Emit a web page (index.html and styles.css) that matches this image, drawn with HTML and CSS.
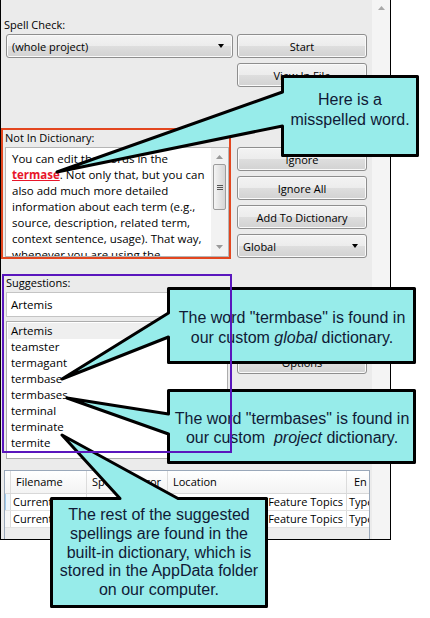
FILE: index.html
```html
<!DOCTYPE html>
<html>
<head>
<meta charset="utf-8">
<link rel="stylesheet" href="styles.css">
</head>
<body>
<div class="page">
  <div class="window">
    <div class="main">
      <section class="sec sec-top">
        <div class="col-left">
          <div class="label lbl-spell">Spell Check:</div>
          <div class="combo combo-wide"><span>(whole project)</span><i class="arrow"></i></div>
        </div>
        <div class="col-right pad-top">
          <div class="btn">Start</div>
          <div class="btn">View In File</div>
        </div>
      </section>

      <section class="sec sec-nid">
        <div class="col-left">
          <div class="frame frame-red">
            <div class="label">Not In Dictionary:</div>
            <div class="textbox">
              <div class="tb-text">You can edit the words in the<br><span class="miss">termase</span>. Not only that, but you can<br>also add much more detailed<br>information about each term (e.g.,<br>source, description, related term,<br>context sentence, usage). That way,<br>whenever you are using the</div>
              <div class="vscroll">
                <svg class="sarrow" width="7" height="4" viewBox="0 0 7 4"><path d="M0 4 L3.5 0 L7 4 Z" fill="#9a9a9a"/></svg>
                <div class="thumb"><i></i><i></i><i></i></div>
                <svg class="sarrow down" width="7" height="4" viewBox="0 0 7 4"><path d="M0 0 L3.5 4 L7 0 Z" fill="#9a9a9a"/></svg>
              </div>
            </div>
          </div>
        </div>
        <div class="col-right pad-nid">
          <div class="btn">Ignore</div>
          <div class="btn">Ignore All</div>
          <div class="btn">Add To Dictionary</div>
          <div class="combo"><span>Global</span><i class="arrow"></i></div>
        </div>
      </section>

      <section class="sec sec-sugg">
        <div class="col-left">
          <div class="frame frame-purple">
            <div class="label">Suggestions:</div>
            <div class="input">Artemis</div>
            <div class="list">
              <div class="item sel">Artemis</div>
              <div class="item">teamster</div>
              <div class="item">termagant</div>
              <div class="item">termbase</div>
              <div class="item">termbases</div>
              <div class="item">terminal</div>
              <div class="item">terminate</div>
              <div class="item">termite</div>
            </div>
          </div>
        </div>
        <div class="col-right pad-sugg">
          <div class="btn">Options</div>
        </div>
      </section>

      <div class="grid">
        <div class="trow thead">
          <div class="cell rh"></div>
          <div class="cell">Filename</div>
          <div class="cell">Spelling Error</div>
          <div class="cell">Location</div>
          <div class="cell last">En</div>
        </div>
        <div class="trow">
          <div class="cell rh cur"></div>
          <div class="cell">Current Project</div>
          <div class="cell">termase</div>
          <div class="cell right">Content/Feature Topics</div>
          <div class="cell last">Type</div>
        </div>
        <div class="trow">
          <div class="cell rh"></div>
          <div class="cell">Current Project</div>
          <div class="cell">termase</div>
          <div class="cell right">Content/Feature Topics</div>
          <div class="cell last">Type</div>
        </div>
      </div>
    </div>
    <div class="wscroll">
      <svg width="7" height="4" viewBox="0 0 7 4"><path d="M0 4 L3.5 0 L7 4 Z" fill="#a8a8a8"/></svg>
    </div>
  </div>

  <svg class="callouts" width="430" height="618" viewBox="0 0 430 618">
    <g fill="#97ecea" stroke="#000" stroke-width="3" stroke-linejoin="round">
      <path d="M282.5,76.5 H417.5 V155.5 H282.5 V126 L57,172 L282.5,92 Z"/>
      <path d="M168.5,288.5 H414.5 V362.5 H168.5 V337 L62,379 L168.5,313 Z"/>
      <path d="M168.5,390.5 H414.5 V462.5 H168.5 V434 L67,398 L168.5,414 Z"/>
      <path d="M51.5,498.5 H120 L62,435 L178,498.5 H266.5 V606.5 H51.5 Z"/>
    </g>
  </svg>
  <div class="ctext c1">Here is a<br>misspelled word.</div>
  <div class="ctext c2">The word "termbase" is found in<br>our custom <em>global</em> dictionary.</div>
  <div class="ctext c3">The word "termbases" is found in<br>our custom &nbsp;<em>project</em> dictionary.</div>
  <div class="ctext c4">The rest of the suggested<br>spellings are found in the<br>built-in dictionary, which is<br>stored in the AppData folder<br>on our computer.</div>
</div>
</body>
</html>
```

FILE: styles.css
```css
* { box-sizing: border-box; }
body {
  margin: 0;
  background: #fff;
  font-family: "Open Sans", "Noto Sans", sans-serif;
  font-size: 11px;
  color: #000;
}
.page {
  position: relative;
  width: 430px;
  height: 618px;
  overflow: hidden;
}
.window {
  width: 391px;
  height: 540px;
  border: 1px solid #000;
  border-top: 0;
  background: #ebebeb;
  display: flex;
}
.main {
  width: 371px;
  display: flex;
  flex-direction: column;
}
.wscroll {
  width: 18px;
  background: #f4f4f4;
  display: flex;
  justify-content: center;
  padding-top: 6px;
}
.wscroll svg { display: block; }

.sec { display: flex; gap: 4px; }
.col-left { width: 232px; }
.col-right {
  width: 130px;
  display: flex;
  flex-direction: column;
  gap: 5px;
}
.pad-top { padding-top: 34px; }
.pad-nid { padding-top: 19px; }
.pad-sugg { padding-top: 76px; }

.label {
  height: 16px;
  line-height: 16px;
  white-space: nowrap;
}
.lbl-spell { margin-top: 17px; padding-left: 3px; }

.btn, .combo {
  height: 24px;
  border: 1px solid #8e8e8e;
  border-radius: 3px;
  background: linear-gradient(#f3f3f3 0%, #ececec 50%, #dedede 50%, #d2d2d2 100%);
  box-shadow: inset 0 0 0 1px #fafafa;
  display: flex;
  align-items: center;
  white-space: nowrap;
}
.btn { justify-content: center; }
.combo {
  justify-content: space-between;
  padding: 0 8px 0 5px;
}
.combo-wide { margin: 1px 0 0 5px; width: 227px; }
.arrow {
  width: 0;
  height: 0;
  border-left: 3.5px solid transparent;
  border-right: 3.5px solid transparent;
  border-top: 4px solid #000;
}

.sec-nid { margin-top: 41px; }
.frame { position: relative; }
.frame::after {
  content: "";
  position: absolute;
  inset: 0;
  border: 2px solid;
  pointer-events: none;
}
.frame-red {
  width: 230px;
  height: 131px;
  padding: 2px 2px 2px 4px;
}
.frame-red::after { border-color: #e3461f; }

.textbox {
  margin-top: 1px;
  height: 110px;
  background: #fff;
  border: 1px solid #b5b5b5;
  display: flex;
  overflow: hidden;
}
.tb-text {
  flex: 1;
  padding: 3px 0 0 6px;
  line-height: 16px;
  font-size: 11.5px;
  white-space: nowrap;
  overflow: hidden;
}
.miss {
  color: #e8162a;
  font-weight: bold;
  text-decoration: underline;
}
.vscroll {
  width: 17px;
  background: #f2f2f2;
  display: flex;
  flex-direction: column;
  align-items: center;
  padding-top: 7px;
}
.sarrow { display: block; }
.sarrow.down { margin-top: auto; margin-bottom: 7px; }
.thumb {
  margin-top: 5px;
  width: 13px;
  height: 46px;
  border: 1px solid #9c9c9c;
  border-radius: 2px;
  background: linear-gradient(90deg, #f4f4f4, #e4e4e4 50%, #d6d6d6);
  display: flex;
  flex-direction: column;
  align-items: center;
  justify-content: center;
  gap: 1px;
}
.thumb i {
  display: block;
  width: 6px;
  height: 1px;
  background: #555;
}

.sec-sugg { margin-top: 15px; }
.sec-sugg .col-left { padding-left: 1px; }
.frame-purple {
  width: 230px;
  height: 179px;
  padding: 1px 2px 0 4px;
}
.frame-purple::after { border-color: #5a16bd; z-index: 2; }
.input {
  margin-top: 1px;
  height: 25px;
  width: 222px;
  background: #fff;
  border: 1px solid #c4c4c4;
  padding-left: 4px;
  line-height: 23px;
  font-size: 11.5px;
}
.list {
  margin-top: 4px;
  width: 222px;
  height: 138px;
  background: #fff;
  border: 1px solid #acacac;
  padding: 1px 1px 0 1px;
  font-size: 11.5px;
}
.item {
  height: 16px;
  line-height: 16px;
  padding-left: 3px;
}
.item.sel { background: #efefef; }

.grid {
  margin: 17px 0 0 3px;
  width: 366px;
  height: 69px;
  border: 1px solid #9aa8ba;
  border-bottom: 0;
  background: #ededed;
}
.trow {
  display: grid;
  grid-template-columns: 6px 76px 81px 179px 22px;
  height: 17px;
  background: #fff;
  border-bottom: 1px solid #e2e2e2;
}
.thead {
  height: 23px;
  background: linear-gradient(#fff, #f3f3f3);
  border-bottom: 1px solid #d8d8d8;
}
.cell {
  border-right: 1px solid #dcdcdc;
  white-space: nowrap;
  overflow: hidden;
  line-height: 16px;
  padding-left: 2px;
}
.thead .cell { line-height: 22px; padding-left: 5px; }
.thead .cell.last { padding-left: 7px; }
.cell.last { border-right: 0; }
.cell.right { text-align: right; padding-right: 3px; }
.cell.rh { padding: 0; background: #f7f7f7; }
.thead .cell.rh { padding: 0; background: transparent; }
.cell.rh.cur { border-left: 1px solid #9fcdef; background: #eef6fc; }

.callouts {
  position: absolute;
  left: 0;
  top: 0;
}
.ctext {
  position: absolute;
  font-family: "Liberation Sans", Arial, sans-serif;
  font-size: 16px;
  color: #101a36;
  text-align: center;
  white-space: nowrap;
}
.c1 { left: 282px; top: 90px; width: 136px; line-height: 20px; }
.c2 { left: 168px; top: 308px; width: 248px; line-height: 20px; }
.c3 { left: 168px; top: 409px; width: 248px; line-height: 19px; }
.c4 { left: 50px; top: 506px; width: 218px; line-height: 18.75px; }
```
